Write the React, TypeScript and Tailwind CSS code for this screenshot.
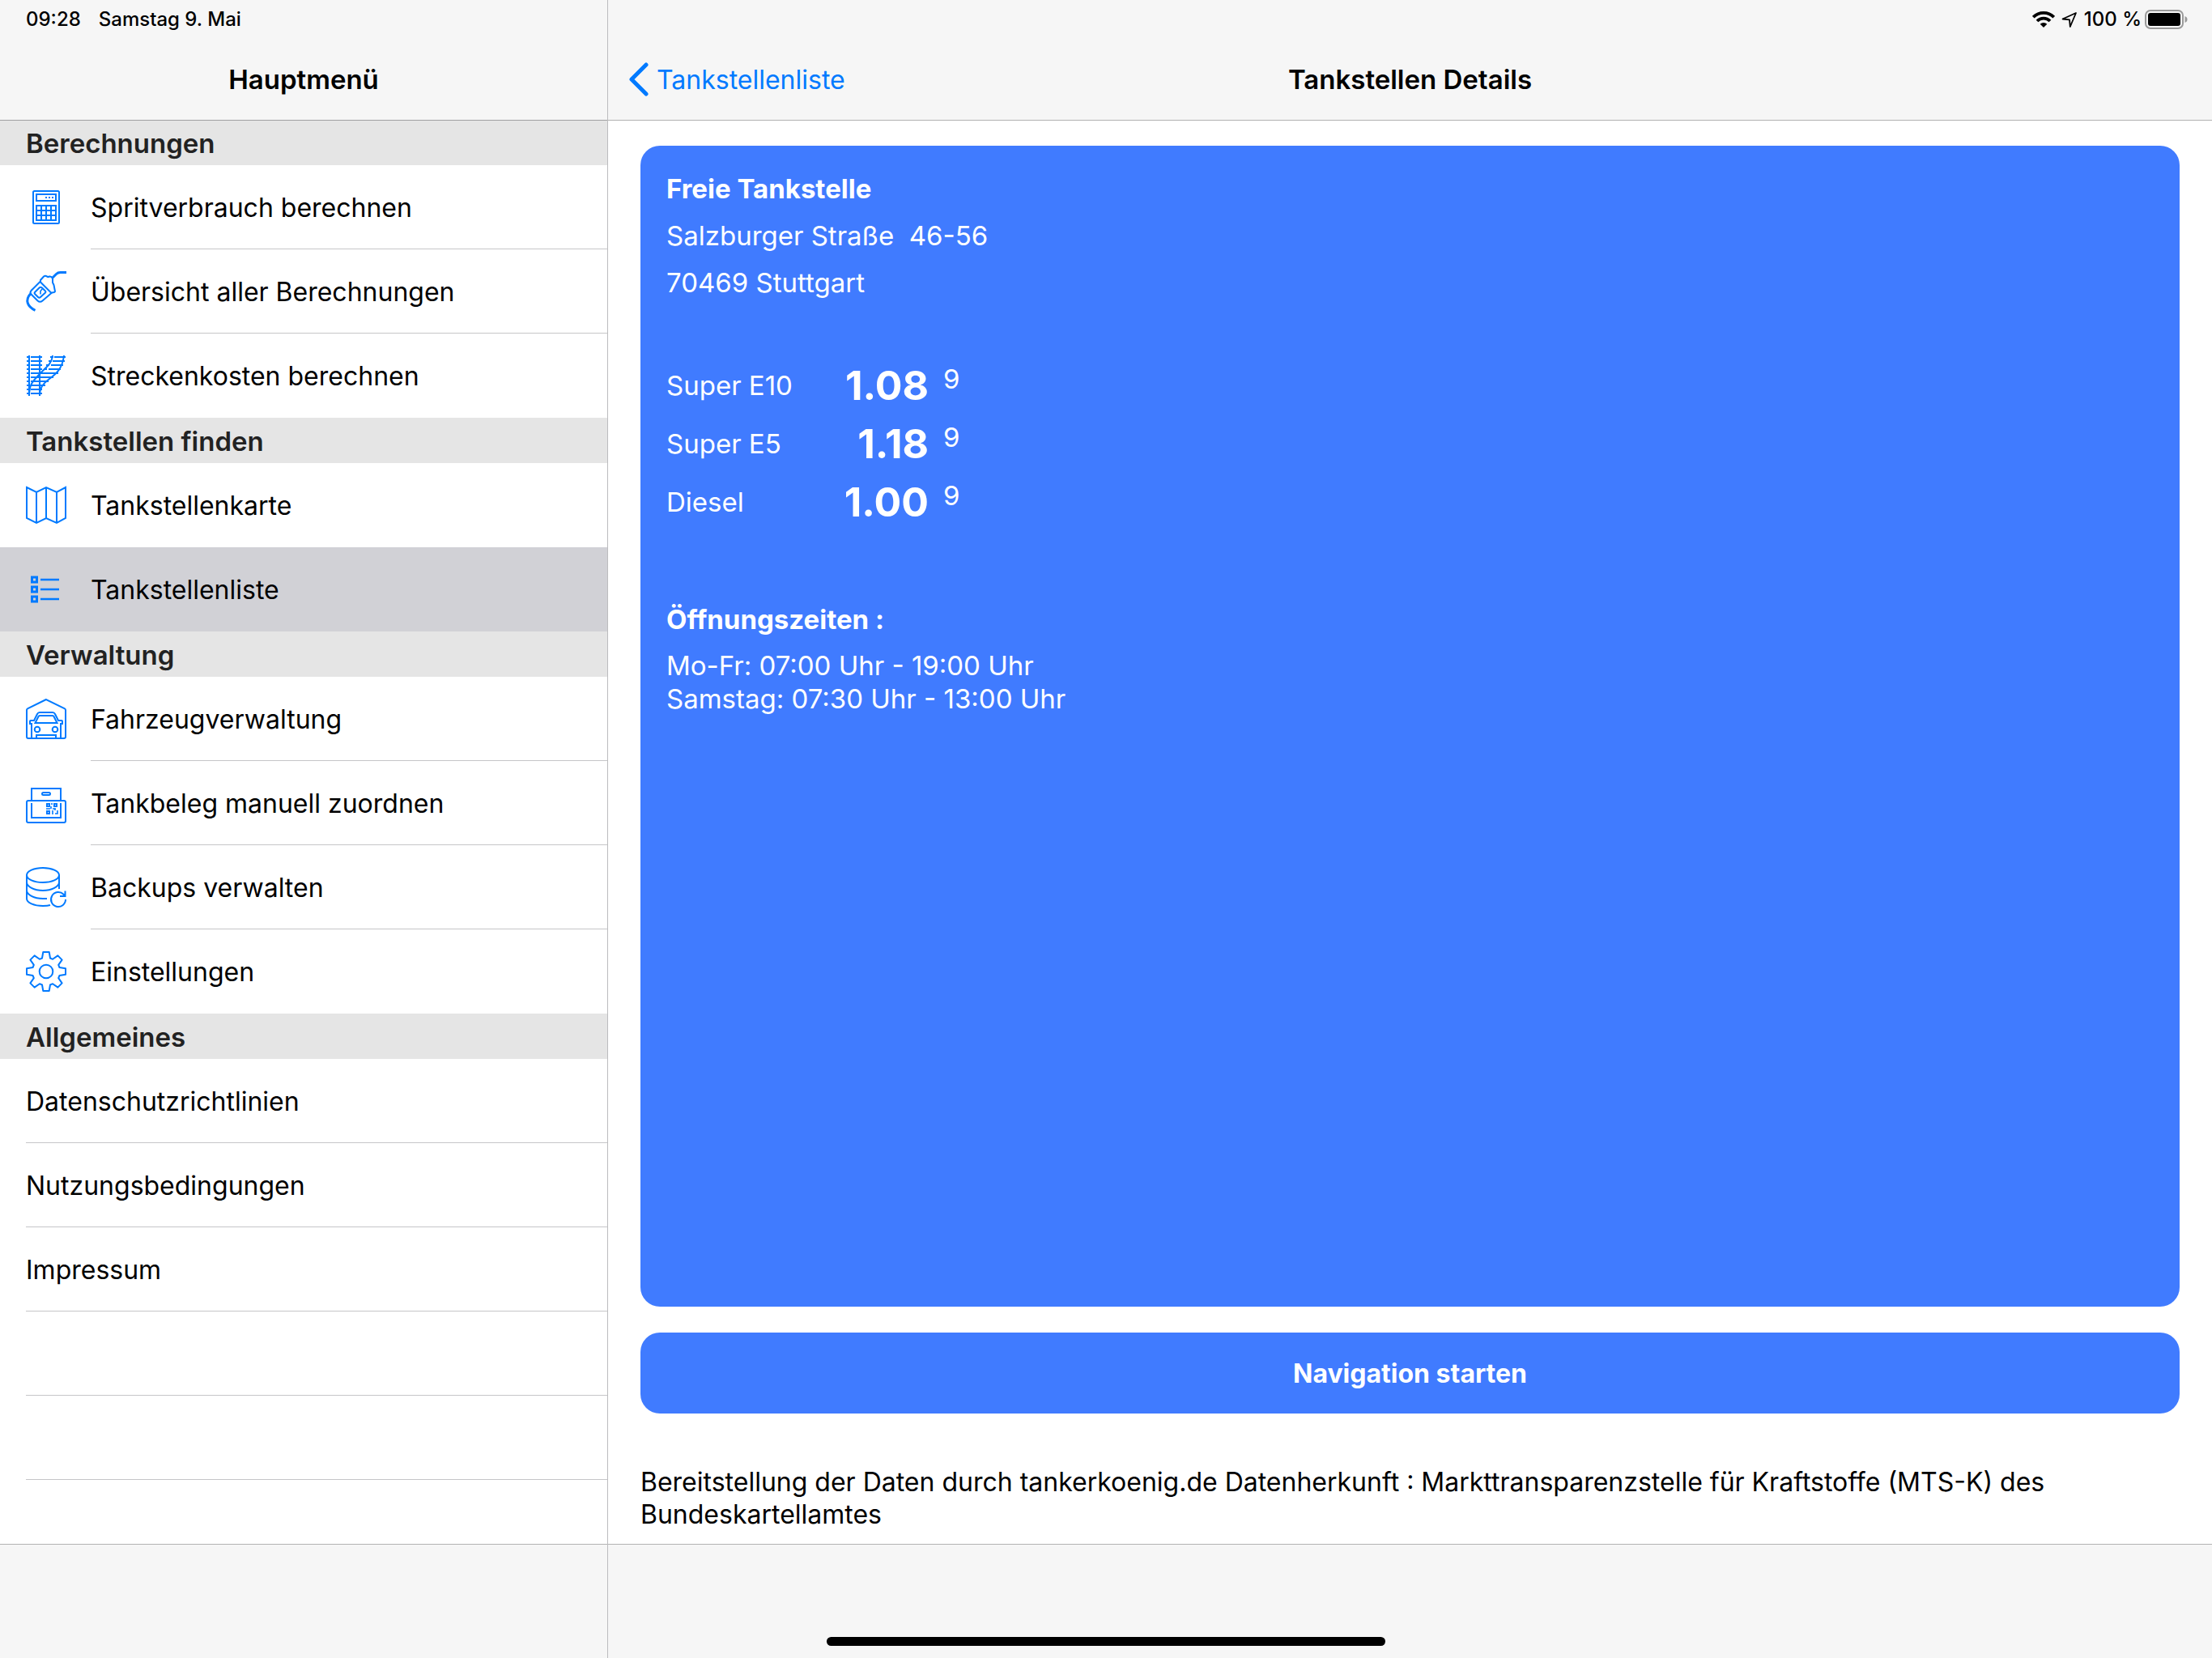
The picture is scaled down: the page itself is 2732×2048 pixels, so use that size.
import type { ReactNode } from "react";

const gearPoints = Array.from({ length: 8 })
  .flatMap((_, i) => {
    const a = (i * Math.PI) / 4;
    const tooth = [[-5, -16.5], [-3.7, -24], [3.7, -24], [5, -16.5]];
    return tooth.map(([x, y]) => {
      const px = 25 + x * Math.cos(a) - y * Math.sin(a);
      const py = 25 + x * Math.sin(a) + y * Math.cos(a);
      return `${px.toFixed(1)},${py.toFixed(1)}`;
    });
  })
  .join(" ");

function Icon({ children }: { children: ReactNode }) {
  return (
    <svg
      viewBox="0 0 50 50"
      className="size-[50px] shrink-0 overflow-visible"
      fill="none"
      stroke="#007aff"
      strokeWidth="2"
      aria-hidden="true"
    >
      {children}
    </svg>
  );
}

const icons = {
  calculator: (
    <Icon>
      <rect x="9" y="5" width="32" height="40" rx="1.5" />
      <rect x="13" y="9" width="24" height="8" />
      <path d="M24 13h2M28 13h2M32 13h2" />
      <rect x="13" y="23" width="24" height="18" />
      <path d="M19 23v18M25 23v18M31 23v18M13 29h24M13 35h24" />
    </Icon>
  ),
  nozzle: (
    <Icon>
      <path d="M11.5 48.3C2 44-1.5 36 5.5 28" strokeWidth="3" />
      <path d="M33 8l4.5-4.5q2-2 5-2H50" strokeWidth="3" />
      <path d="M17.5 13 6.5 24q-2 2.5 0 4.5l8 8q3 2.500 6 0L31.500 27z" />
      <path d="M16.5 20.5 11 26q-1 1 0 2l4 4q1.5 1.5 3 0l6-5.5q1-1 0-2l-4-4q-2-1.5-3.500 0z" />
      <path d="M20.5 21.500l-2.500 3v4" strokeWidth="1.6" />
      <path d="M18 13.5v-2.5L22 6.5q2-1.5 4 0 1.5.8 3 0 2.5-.6 4 2.5v5l1.5 3 1.5 8q-.5 1.5-4.5 1.5" />
    </Icon>
  ),
  rails: (
    <Icon>
      <path d="M4 0v50M17 0v50" />
      <path d="M33 0c-1 11-9 15-16 23S4 34 4 50M47 0c-2 17-10 23-18 29S17 40 17 50" />
      <path d="M1 2h4M6 2h14M1 7h4M6 7h14M1 12h4M6 12h14M1 17h4M6 17h14M1 22h4M6 22h14M1 27h4M6 27h14M1 32h4M6 32h14M1 37h4M6 37h14M1 42h4M6 42h14M1 47h4M6 47h14" />
      <path d="M30 2h4M35 2h14M28 7h4M33 7h15M25 12h4M31 12h15M22 17h4M28 17h15M20 22h20M20 27h14M20 32h8M19 37h5" />
    </Icon>
  ),
  map: (
    <Icon>
      <path d="M1 3l12 6 12-6 13 6 11-6v38l-11 6-13-6-12 6-12-6zM13 9v38M25 3v38M38 9v38" />
    </Icon>
  ),
  list: (
    <Icon>
      <path d="M7.5 10h6v6h-6zM7.5 22h6v6h-6zM7.5 34h6v6h-6z" strokeWidth="3" />
      <path d="M18 13h23M18 25h23M18 37h23" strokeWidth="2.5" />
    </Icon>
  ),
  garage: (
    <Icon>
      <path d="M25 1 2.5 12Q1 13 1 14v33q0 2 2 2h44q2 0 2-2V14q0-1-1.500-2z" />
      <path d="M7 49V31H5v-3q0-1 1-1h4l4-8q1-2 3-2h16q2 0 3 2l4 8h4q1 0 1 1v3h-2v18" />
      <path d="M17 21h16q1 0 1.5 1l4 8h-27l4-8q.5-1 1.5-1z" />
      <circle cx="14" cy="38" r="3.3" />
      <circle cx="36" cy="38" r="3.3" />
      <path d="M13 49v-4h24v4" />
    </Icon>
  ),
  receipt: (
    <Icon>
      <path d="M7 22V7h36v15" />
      <rect x="20" y="12" width="10" height="3" rx="1.5" />
      <rect x="1" y="22" width="48" height="27" rx="2" />
      <path d="M7 25v18h36V25" />
      <path d="M26 26h3v3h-3zM35 26h3v3h-3zM26 35h3v3h-3z" />
      <path d="M32 25v2M31 29v3M25 32h5M33 32h3M36 31v3M33 34v5M36 38h3v-4" strokeWidth="1.6" />
    </Icon>
  ),
  database: (
    <Icon>
      <ellipse cx="21" cy="10" rx="20" ry="9" />
      <path d="M1 10v29c0 5 9 9 20 9 3 0 6 0 9-1M41 10v17M1 19c0 5 9 10 20 10s20-5 20-10M1 29c0 5 9 10 20 10h5" />
      <path d="M49 40a9 9 0 1 1-2.500-6.200L48.500 36M48.500 29.500V36H42" />
    </Icon>
  ),
  gear: (
    <Icon>
      <polygon points={gearPoints} strokeLinejoin="round" />
      <circle cx="25" cy="25" r="8.3" />
    </Icon>
  ),
};

type Item = { label: string; icon?: ReactNode; active?: boolean };

const sections: { title: string; items: Item[] }[] = [
  {
    title: "Berechnungen",
    items: [
      { label: "Spritverbrauch berechnen", icon: icons.calculator },
      { label: "Übersicht aller Berechnungen", icon: icons.nozzle },
      { label: "Streckenkosten berechnen", icon: icons.rails },
    ],
  },
  {
    title: "Tankstellen finden",
    items: [
      { label: "Tankstellenkarte", icon: icons.map },
      { label: "Tankstellenliste", icon: icons.list, active: true },
    ],
  },
  {
    title: "Verwaltung",
    items: [
      { label: "Fahrzeugverwaltung", icon: icons.garage },
      { label: "Tankbeleg manuell zuordnen", icon: icons.receipt },
      { label: "Backups verwalten", icon: icons.database },
      { label: "Einstellungen", icon: icons.gear },
    ],
  },
  {
    title: "Allgemeines",
    items: [
      { label: "Datenschutzrichtlinien" },
      { label: "Nutzungsbedingungen" },
      { label: "Impressum" },
    ],
  },
];

const prices = [
  { fuel: "Super E10", price: "1.08" },
  { fuel: "Super E5", price: "1.18" },
  { fuel: "Diesel", price: "1.00" },
];

// no separator above a section header or next to the selected row
function hasLine(items: Item[], i: number, lastSection: boolean) {
  if (i === items.length - 1) return lastSection;
  return !items[i].active && !items[i + 1].active;
}

function MenuItem({ item, line }: { item: Item; line: boolean }) {
  return (
    <li className={item.active ? "bg-[#d1d1d6]" : "bg-white"}>
      <a href="#" className="flex h-[104px] items-center gap-[30px] pl-8 text-[32px]">
        {item.icon}
        <span className={`flex h-full flex-1 items-center border-b pt-0.5 ${line ? "border-[#c6c6c8]" : "border-transparent"}`}>
          {item.label}
        </span>
      </a>
    </li>
  );
}

function Sidebar() {
  return (
    <aside className="flex w-[751px] shrink-0 flex-col border-r border-[#bcbcbe]">
      <header className="h-[149px] border-b border-[#a0a0a2] bg-[#f6f6f6]">
        <div className="flex h-12 items-center gap-[22px] pl-8 text-2xl font-medium">
          <span>09:28</span>
          <span>Samstag 9. Mai</span>
        </div>
        <h1 className="flex h-[100px] items-center justify-center font-semibold">Hauptmenü</h1>
      </header>
      <nav className="flex-1">
        {sections.map((section, index) => (
          <section key={section.title}>
            <h2 className={`flex items-center bg-[#e5e5e5] pt-0.5 pl-8 font-semibold text-[#222] ${index === 0 ? "h-[55px]" : "h-14"}`}>
              {section.title}
            </h2>
            <ul>
              {section.items.map((item, i) => (
                <MenuItem
                  key={item.label}
                  item={item}
                  line={hasLine(section.items, i, index === sections.length - 1)}
                />
              ))}
            </ul>
          </section>
        ))}
        <div className="ml-8 h-[104px] border-b border-[#c6c6c8]" />
        <div className="ml-8 h-[104px] border-b border-[#c6c6c8]" />
      </nav>
      <footer className="h-[141px] border-t border-[#b2b2b2] bg-[#f6f6f6]" />
    </aside>
  );
}

function StatusIcons() {
  return (
    <div className="flex h-12 items-center justify-end pr-[30px] text-2xl font-medium">
      <svg viewBox="0 0 28 20" className="mr-2 h-5 w-7" fill="none" stroke="#000" strokeWidth="3.8" aria-hidden="true">
        <path d="M1.3 7.2a18 18 0 0 1 25.4 0M6 12a11.3 11.3 0 0 1 16 0" />
        <path d="M14 20l-4.300-4.300a6.100 6.100 0 0 1 8.600 0z" fill="#000" stroke="none" />
      </svg>
      <svg viewBox="0 0 20 20" className="mr-2 size-5" fill="none" stroke="#000" strokeWidth="1.8" strokeLinejoin="round" aria-hidden="true">
        <path d="M18 2 1.5 9.5l8.500.8.8 8.700z" />
      </svg>
      <span>100 %</span>
      <svg viewBox="0 0 53 24" className="ml-1 h-6 w-[53px]" aria-hidden="true">
        <rect x="1" y="1" width="46" height="22" rx="6" fill="none" stroke="#9a9a9a" strokeWidth="2" />
        <rect x="4" y="4" width="40" height="16" rx="3" />
        <path d="M49.5 8q3 1.200 3 4t-3 4z" fill="#9a9a9a" />
      </svg>
    </div>
  );
}

function Details() {
  return (
    <main className="flex min-w-0 flex-1 flex-col">
      <header className="h-[149px] border-b border-[#b2b2b2] bg-[#f6f6f6]">
        <StatusIcons />
        <div className="grid h-[100px] grid-cols-[1fr_auto_1fr] items-center">
          <a href="#" className="flex items-center gap-2 pl-6 text-[32px] text-[#007aff]">
            <svg viewBox="0 0 28 42" className="h-[42px] w-7" fill="none" stroke="currentColor" strokeWidth="5" strokeLinecap="round" strokeLinejoin="round" aria-hidden="true">
              <path d="M23 3 5 21l18 18" />
            </svg>
            Tankstellenliste
          </a>
          <h1 className="font-semibold">Tankstellen Details</h1>
        </div>
      </header>
      <div className="flex flex-1 flex-col px-10 pt-[31px] pb-4">
        <article className="flex-1 rounded-3xl bg-[#407bff] px-8 pt-6 text-white">
          <h2 className="leading-[58px] font-bold">Freie Tankstelle</h2>
          <p className="leading-[58px] whitespace-pre">Salzburger Straße  46-56</p>
          <p className="leading-[58px]">70469 Stuttgart</p>
          <table className="mt-[62px]">
            <tbody>
              {prices.map(({ fuel, price }) => (
                <tr key={fuel} className="h-[72px]">
                  <th scope="row" className="w-[160px] p-0 text-left font-normal">{fuel}</th>
                  <td className="w-[164px] p-0 text-right text-[50px] leading-none font-bold">{price}</td>
                  <td className="pb-4 pl-[18px] leading-none">9</td>
                </tr>
              ))}
            </tbody>
          </table>
          <h3 className="mt-20 mb-2 leading-[58px] font-bold">Öffnungszeiten :</h3>
          <p>Mo-Fr: 07:00 Uhr - 19:00 Uhr</p>
          <p>Samstag: 07:30 Uhr - 13:00 Uhr</p>
        </article>
        <button type="button" className="mt-8 h-[100px] rounded-3xl bg-[#407bff] text-[32px] font-bold text-white">
          Navigation starten
        </button>
        <p className="mt-[65px] text-[32px] leading-10">
          Bereitstellung der Daten durch tankerkoenig.de Datenherkunft : Markttransparenzstelle für Kraftstoffe (MTS-K) des
          Bundeskartellamtes
        </p>
      </div>
      <footer className="h-[141px] border-t border-[#b2b2b2] bg-[#f6f6f6]" />
    </main>
  );
}

export default function App() {
  return (
    <div className="relative flex min-h-screen bg-white font-['Inter',sans-serif] text-[33px] leading-[41px] text-black">
      <Sidebar />
      <Details />
      <div className="absolute bottom-[15px] left-1/2 h-[11px] w-[690px] -translate-x-1/2 rounded-full bg-black" />
    </div>
  );
}
